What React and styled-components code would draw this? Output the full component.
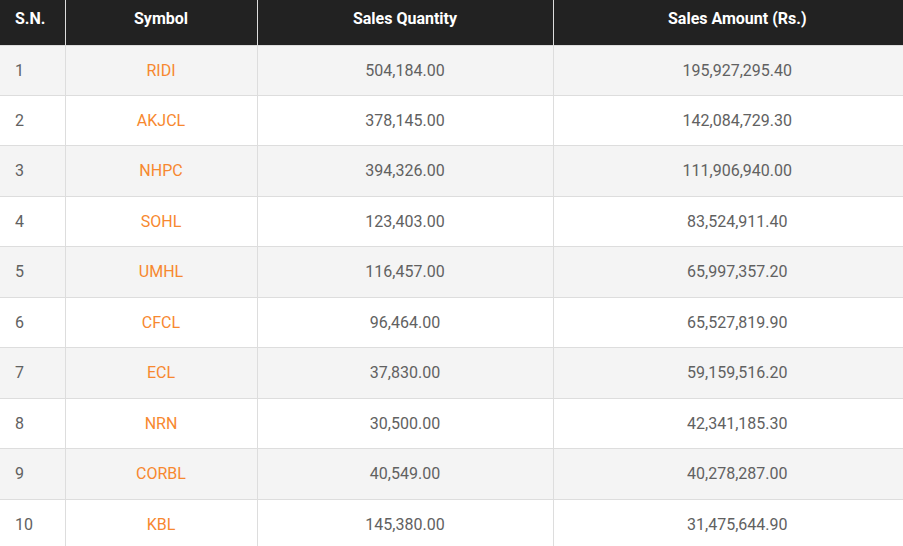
import React from "react";
import styled, { createGlobalStyle } from "styled-components";

const Global = createGlobalStyle`
  html, body { margin: 0; padding: 0; background: #fff; overflow: hidden; }
  body { font-family: Roboto, "Liberation Sans", sans-serif; }
`;

const Wrap = styled.div`
  width: 903px;
  overflow: hidden;
`;

const Table = styled.table`
  width: 921px;
  border-collapse: collapse;
  table-layout: fixed;
  font-family: Roboto, "Liberation Sans", sans-serif;
  font-size: 16px;
`;

const HeadCell = styled.th`
  background: #222222;
  color: #ffffff;
  font-weight: 700;
  height: 45px;
  padding: 0 15px 6px;
  box-sizing: border-box;
  text-align: ${(p) => p.$align || "center"};
  border-left: 1px solid #dddddd;
  border-bottom: 1px solid #dddddd;
  line-height: 20px;
  vertical-align: middle;
  &:first-child { border-left: none; }
`;

const Row = styled.tr`
  background: ${(p) => (p.$odd ? "#f4f4f4" : "#ffffff")};
`;

const Cell = styled.td`
  padding: 14px 15px;
  line-height: 21.45px;
  color: ${(p) => (p.$accent ? "#f7882f" : "#616161")};
  text-align: ${(p) => p.$align || "center"};
  border-left: 1px solid #dddddd;
  border-bottom: 1px solid #dddddd;
  white-space: nowrap;
  &:first-child { border-left: none; }
`;

const rows = [
  ["RIDI", "504,184.00", "195,927,295.40"],
  ["AKJCL", "378,145.00", "142,084,729.30"],
  ["NHPC", "394,326.00", "111,906,940.00"],
  ["SOHL", "123,403.00", "83,524,911.40"],
  ["UMHL", "116,457.00", "65,997,357.20"],
  ["CFCL", "96,464.00", "65,527,819.90"],
  ["ECL", "37,830.00", "59,159,516.20"],
  ["NRN", "30,500.00", "42,341,185.30"],
  ["CORBL", "40,549.00", "40,278,287.00"],
  ["KBL", "145,380.00", "31,475,644.90"],
];

export default function App() {
  return (
    <>
      <Global />
      <Wrap>
        <Table>
          <colgroup>
            <col style={{ width: 65 }} />
            <col style={{ width: 192 }} />
            <col style={{ width: 296 }} />
            <col style={{ width: 368 }} />
          </colgroup>
          <thead>
            <tr>
              <HeadCell $align="left">S.N.</HeadCell>
              <HeadCell>Symbol</HeadCell>
              <HeadCell>Sales Quantity</HeadCell>
              <HeadCell>Sales Amount (Rs.)</HeadCell>
            </tr>
          </thead>
          <tbody>
            {rows.map((r, i) => (
              <Row key={r[0]} $odd={i % 2 === 0}>
                <Cell $align="left">{i + 1}</Cell>
                <Cell $accent>{r[0]}</Cell>
                <Cell>{r[1]}</Cell>
                <Cell>{r[2]}</Cell>
              </Row>
            ))}
          </tbody>
        </Table>
      </Wrap>
    </>
  );
}
